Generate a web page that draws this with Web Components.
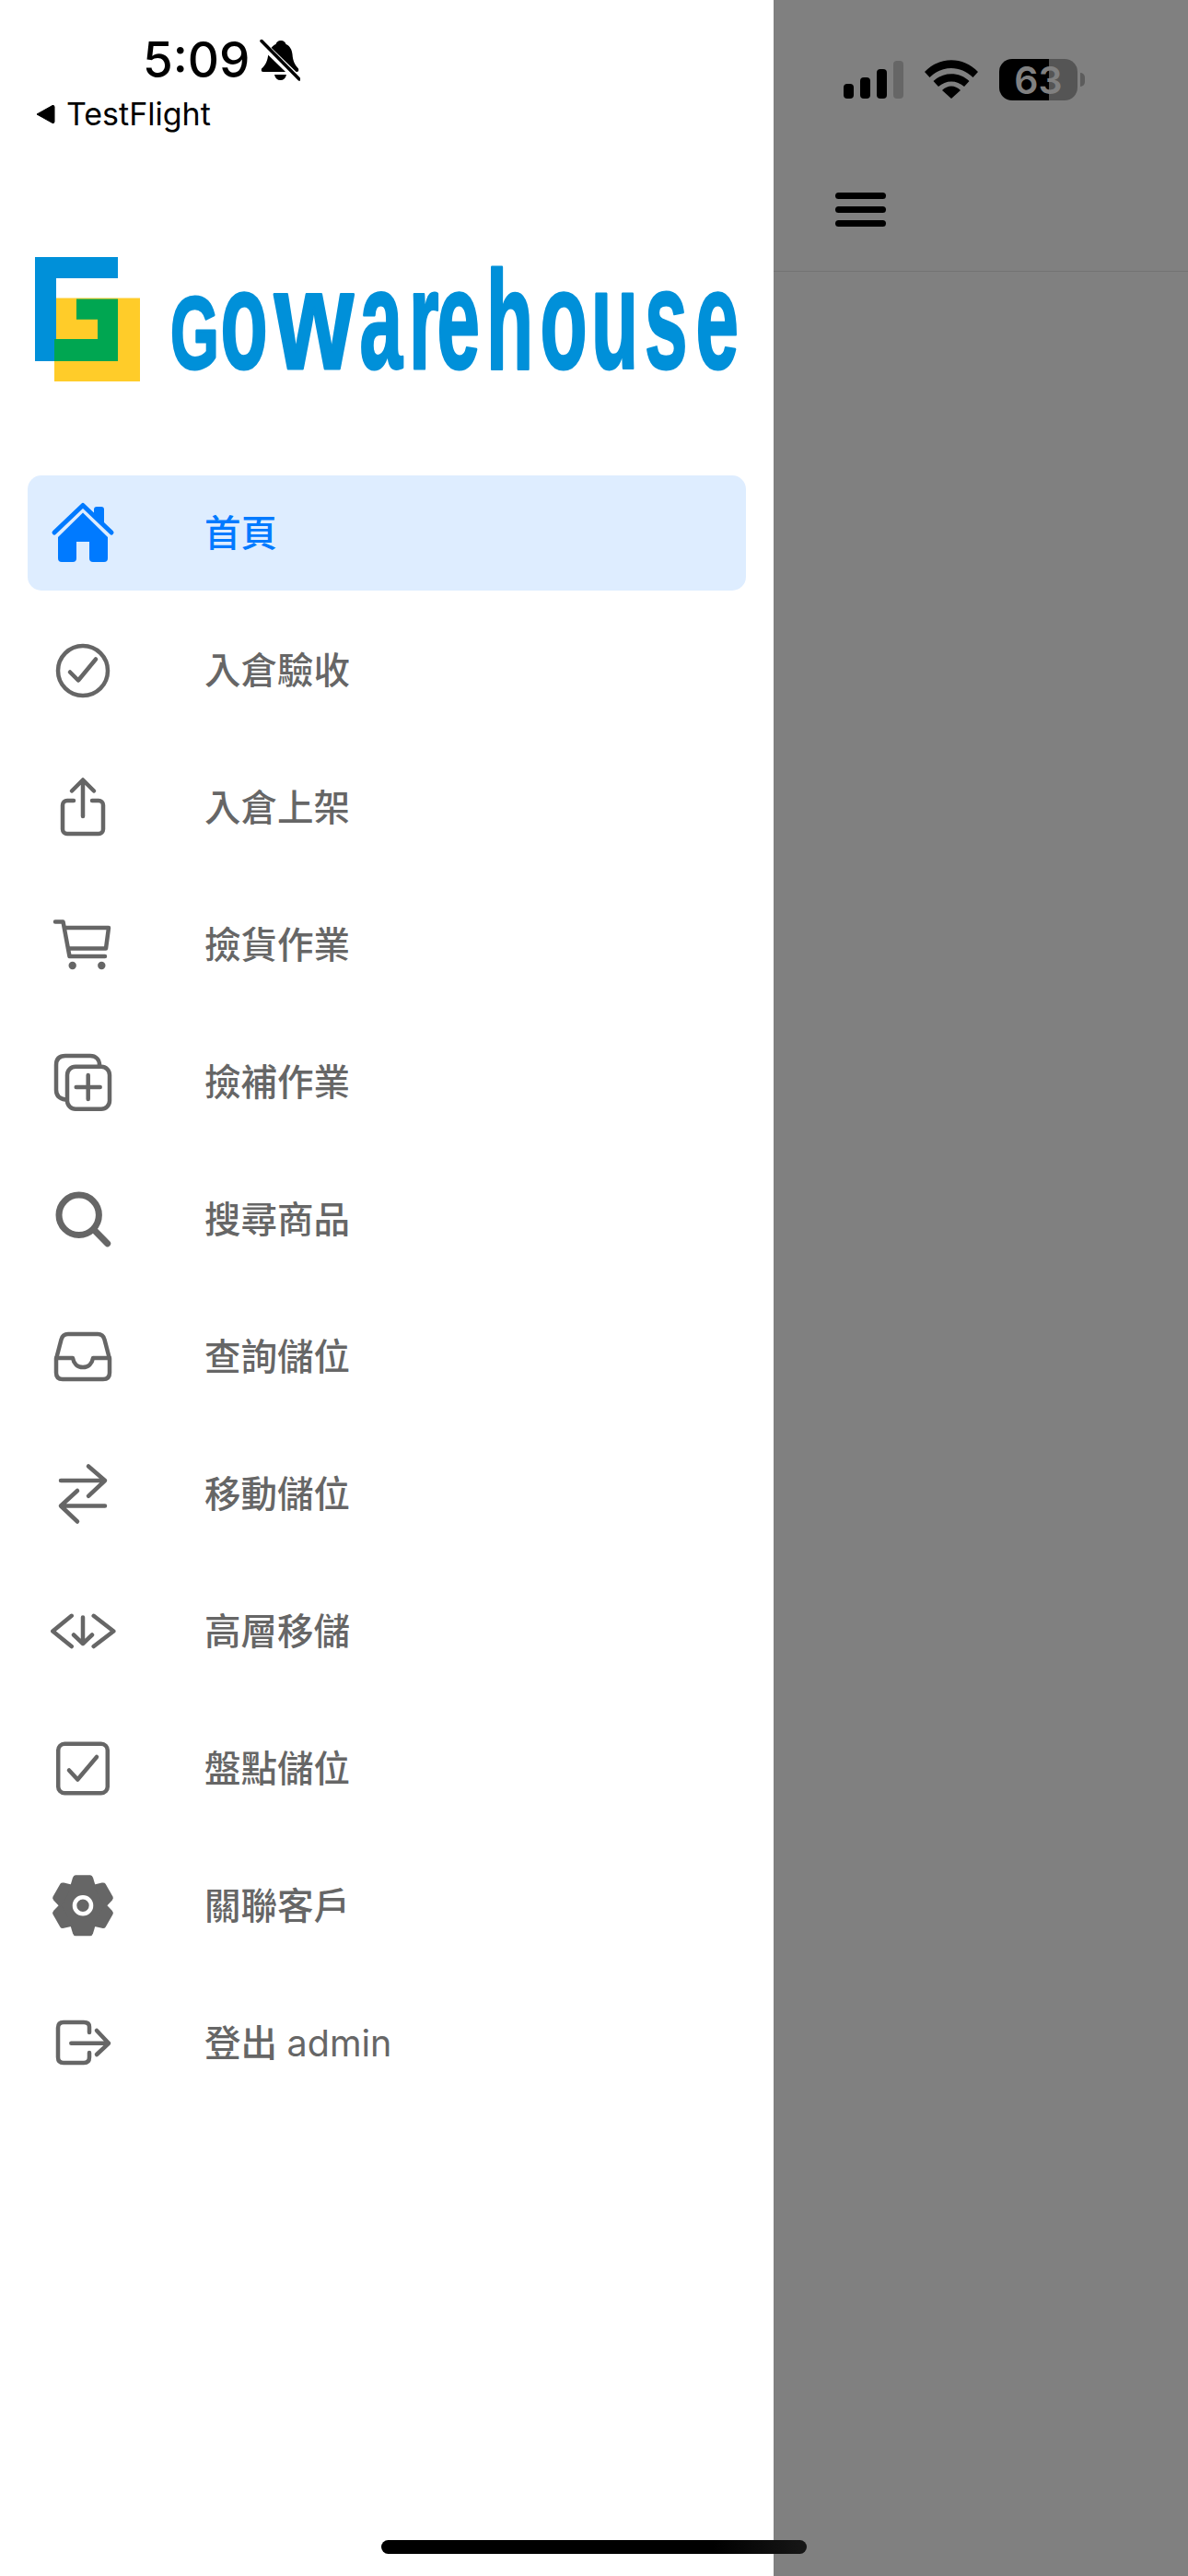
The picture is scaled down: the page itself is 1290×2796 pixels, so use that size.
<!DOCTYPE html>
<html lang="zh-Hant">
<head>
<meta charset="utf-8">
<title>gowarehouse</title>
<style>
  html, body { margin: 0; padding: 0; background: #fff; }
  body { font-family: Inter, "Noto Sans CJK TC", sans-serif; }
  .latin { font-weight: 400; }
</style>
</head>
<body>
<wh-app>
  <wh-drawer>
    <wh-status-left></wh-status-left>
    <wh-logo></wh-logo>
    <wh-nav>
      <wh-nav-item icon="home" active>首頁</wh-nav-item>
      <wh-nav-item icon="checkCircle">入倉驗收</wh-nav-item>
      <wh-nav-item icon="upload">入倉上架</wh-nav-item>
      <wh-nav-item icon="cart">撿貨作業</wh-nav-item>
      <wh-nav-item icon="plusCopy">撿補作業</wh-nav-item>
      <wh-nav-item icon="search">搜尋商品</wh-nav-item>
      <wh-nav-item icon="inbox">查詢儲位</wh-nav-item>
      <wh-nav-item icon="swap">移動儲位</wh-nav-item>
      <wh-nav-item icon="codeDown">高層移儲</wh-nav-item>
      <wh-nav-item icon="checkSquare">盤點儲位</wh-nav-item>
      <wh-nav-item icon="gear">關聯客戶</wh-nav-item>
      <wh-nav-item icon="logout">登出 <span class="latin">admin</span></wh-nav-item>
    </wh-nav>
  </wh-drawer>
  <wh-scrim>
    <wh-status-right></wh-status-right>
    <wh-topbar></wh-topbar>
  </wh-scrim>
</wh-app>

<script>
const FONT = 'Inter, "Noto Sans CJK TC", sans-serif';

// all icons are drawn in a 78x78 box, the row centers it
const ICONS = {
  home: `
    <path fill="currentColor" stroke="none" d="M51 18V13Q51 10 54 10H59Q62 10 62 13V31Z"/>
    <path fill="none" stroke-width="5" d="M8 38L39 8.5L70 38"/>
    <path fill="currentColor" stroke="none" d="M39 16.5L66 43V66Q66 70 62 70H50Q46 70 46 66V48H32V66Q32 70 28 70H16Q12 70 12 66V43Z"/>`,
  checkCircle: `
    <circle cx="39" cy="39" r="27"/>
    <path d="M25 40.5L34 49.5L53 26.5"/>`,
  upload: `
    <path d="M27 20.5L39 8.5L51 20.5M39 9V48"/>
    <path d="M29 31H22A5 5 0 0 0 17 36V62A5 5 0 0 0 22 67H56A5 5 0 0 0 61 62V36A5 5 0 0 0 56 31H49"/>`,
  cart: `
    <path d="M9 13.5H17.5L24.5 51H63"/>
    <path d="M20 20H67L64 42.5H24"/>
    <circle cx="27.7" cy="61" r="4.2" fill="currentColor" stroke="none"/>
    <circle cx="59.3" cy="61" r="4.2" fill="currentColor" stroke="none"/>`,
  plusCopy: `
    <path d="M57 20C57 14 53 10 47 10H20Q10 10 10 20V47Q10 56 20 57.5"/>
    <rect x="22" y="21.7" width="46" height="46" rx="9"/>
    <path d="M31.7 44H57.7M44.7 31V57"/>`,
  search: `
    <circle cx="34.7" cy="33.8" r="21.7" stroke-width="7"/>
    <path d="M50.7 49.5L65.7 64.8" stroke-width="7"/>`,
  inbox: `
    <path d="M10 41L15.5 20Q17 14 23 14H55Q61 14 62.5 20L68 41V56Q68 63 61 63H17Q10 63 10 56Z"/>
    <path d="M10 40H28C29 46 33 50 39 50C45 50 49 46 50 40H68"/>`,
  swap: `
    <path d="M15 24H63M45 8.5L63 24L45 40.8"/>
    <path d="M63 51.5H15M33 35L15 51.5L33 68.5"/>`,
  codeDown: `
    <path d="M26.7 21.8L6.3 38.5L26.7 55M50.7 21.8L72.3 38.5L50.7 55"/>
    <path d="M39 23.5V51.8M29 42.5L39 52L49 42.5"/>`,
  checkSquare: `
    <rect x="12.2" y="11.7" width="53.6" height="53.6" rx="7"/>
    <path d="M24 40.5L33.3 50.5L54 26"/>`,
  gear: `
    <g fill="currentColor" stroke="none">
      <circle cx="39" cy="38.2" r="24.5"/>
      ${[0, 60, 120, 180, 240, 300].map(a => `<path transform="rotate(${a} 39 38.2)" d="M31 5.2H47Q49 5.2 50 8L53 18H25L28 8Q29 5.2 31 5.2Z"/>`).join("")}
    </g>
    <circle cx="39" cy="38.2" r="9" stroke="#fff" stroke-width="4.6"/>`,
  logout: `
    <path d="M46 27V21Q46 16 40 16H18Q12 16 12 22V54Q12 60 18 60H40Q46 60 46 54V49"/>
    <path d="M26.3 38.8H67M54 25L67 38.8L54 51"/>`,
};

class WhApp extends HTMLElement {
  constructor() {
    super();
    this.attachShadow({ mode: "open" }).innerHTML = `
      <style>
        :host { display: flex; position: relative; width: 1290px; height: 2796px; overflow: hidden; background: #fff; }
        .home-bar {
          position: absolute; left: 414px; top: 2757px; width: 462px; height: 15px;
          border-radius: 8px; background: linear-gradient(90deg, #000 78%, #171717);
        }
      </style>
      <slot></slot>
      <div class="home-bar"></div>`;
  }
}

class WhDrawer extends HTMLElement {
  constructor() {
    super();
    this.attachShadow({ mode: "open" }).innerHTML = `
      <style>
        :host { display: flex; flex-direction: column; width: 840px; flex: none; background: #fff; }
      </style>
      <slot></slot>`;
  }
}

class WhStatusLeft extends HTMLElement {
  constructor() {
    super();
    this.attachShadow({ mode: "open" }).innerHTML = `
      <style>
        :host { display: block; height: 270px; color: #000; font-family: ${FONT}; }
        .time { display: flex; align-items: center; gap: 11px; height: 60px; margin-top: 35px; padding-left: 155px; font-size: 53px; font-weight: 500; }
        .time svg { width: 44px; height: 46px; margin-top: -1px; }
        .back { display: flex; align-items: center; gap: 12px; height: 57px; padding-left: 38px; font-size: 34px; }
        .back svg { width: 22px; height: 22px; }
      </style>
      <div class="time">
        <span>5:09</span>
        <svg viewBox="0 0 44 46">
          <path d="M23 2C26 2 28 4 28.500 6C33 8 35 12 35.500 17C36 24 38 28 42 32.500Q43 36 40 36H4Q1 36 2 32.500C6 29 8 25 9 19C10 12 13 8 17.500 6C18 4 20 2 23 2Z"/>
          <path d="M16 39H29C28 43 26 45 22.500 45C19 45 17 43 16 39Z"/>
          <path d="M2 5L42 44" stroke="#fff" stroke-width="8"/>
          <path d="M2 2.500L43 44" stroke="#000" stroke-width="3.500" stroke-linecap="round"/>
        </svg>
      </div>
      <div class="back">
        <svg viewBox="0 0 22 22"><path d="M2 11L19 1.500Q21 1 21 3V19Q21 21 19 20.500Z" stroke="#000" stroke-width="1" stroke-linejoin="round"/></svg>
        <span>TestFlight</span>
      </div>`;
  }
}

class WhLogo extends HTMLElement {
  constructor() {
    super();
    // the word is squeezed to 0.55 width, so x values are given in page px and divided
    const sx = x => (x / 0.55).toFixed(1);
    const rest = [390.5, 444, 474.5, 528, 586.5, 642, 700, 755.5].map(sx).join(" ");
    this.attachShadow({ mode: "open" }).innerHTML = `
      <style>
        :host { display: block; height: 246px; }
        svg { display: block; width: 840px; height: 246px; filter: blur(0.7px); }
        text { font-family: "Liberation Sans", sans-serif; font-weight: 700; fill: #0090d9; }
      </style>
      <svg viewBox="0 270 840 246">
        <rect x="59" y="323.500" width="93" height="90.500" fill="#ffcc29"/>
        <path fill="#0090d9" d="M38 279H128V302H61V392H38Z"/>
        <path fill="#00a651" d="M83 324.500H128V392H59V368H106V346.700H83Z"/>
        <text transform="scale(0.55 1)" y="400.500" font-size="152" stroke="#0090d9" stroke-width="3" stroke-linejoin="round"><tspan x="${sx(185)}" font-size="112" textLength="96" lengthAdjust="spacingAndGlyphs">G</tspan><tspan x="${sx(239.5)}">o</tspan><tspan x="${sx(298)}" textLength="156" lengthAdjust="spacingAndGlyphs">w</tspan><tspan x="${rest}">arehouse</tspan></text>
      </svg>`;
  }
}

class WhNav extends HTMLElement {
  constructor() {
    super();
    this.attachShadow({ mode: "open" }).innerHTML = `
      <style>
        :host { display: flex; flex-direction: column; gap: 24px; padding: 0 30px; }
      </style>
      <slot></slot>`;
  }
}

class WhNavItem extends HTMLElement {
  constructor() {
    super();
    this.attachShadow({ mode: "open" });
  }

  connectedCallback() {
    const icon = ICONS[this.getAttribute("icon")] || "";
    this.shadowRoot.innerHTML = `
      <style>
        :host {
          display: flex; align-items: center; gap: 93px; height: 125px; padding-left: 21px;
          border-radius: 15px; color: #666; font-family: ${FONT}; font-size: 39.500px; font-weight: 500;
        }
        :host([active]) { background: #deedff; color: #007aff; }
        svg {
          width: 78px; height: 78px; flex: none; fill: none; stroke: currentColor; stroke-width: 4.500;
          stroke-linecap: round; stroke-linejoin: round;
        }
        span { padding-bottom: 6px; }
      </style>
      <svg viewBox="0 0 78 78">${icon}</svg>
      <span><slot></slot></span>`;
  }
}

class WhScrim extends HTMLElement {
  constructor() {
    super();
    this.attachShadow({ mode: "open" }).innerHTML = `
      <style>
        :host { display: block; flex: 1; background: #808080; }
      </style>
      <slot></slot>`;
  }
}

class WhStatusRight extends HTMLElement {
  constructor() {
    super();
    this.attachShadow({ mode: "open" }).innerHTML = `
      <style>
        :host { display: flex; align-items: flex-start; gap: 23px; height: 45px; padding: 64px 0 0 76px; font-family: ${FONT}; }
        svg { display: block; flex: none; }
        .battery { display: flex; align-items: center; gap: 3px; }
        .cell {
          display: flex; align-items: center; justify-content: center; width: 85px; height: 45px; border-radius: 14px;
          background: linear-gradient(90deg, #000 54px, #555 54px); color: #808080; font-size: 41px; font-weight: 600;
        }
        .nub { width: 5px; height: 15px; border-radius: 0 8px 8px 0; background: #5c5c5c; }
      </style>
      <svg width="65" height="45" viewBox="0 0 65 45">
        <rect x="0" y="27" width="11" height="16" rx="4"/>
        <rect x="18" y="20" width="11" height="23" rx="4"/>
        <rect x="36" y="11" width="11" height="32" rx="4"/>
        <rect x="54" y="2" width="11" height="41" rx="4" fill="#666"/>
      </svg>
      <svg width="58" height="45" viewBox="0 0 58 45">
        <path d="M0 14C16 -3 42 -3 58 14L52.500 20C39 6.500 19 6.500 5.500 20Z"/>
        <path d="M9.500 24C20 13.500 38 13.500 48.500 24L43 30C35 22.500 23 22.500 15 30Z"/>
        <path d="M19 34C25 28 33 28 39 34L29 43Z"/>
      </svg>
      <div class="battery">
        <div class="cell">63</div>
        <div class="nub"></div>
      </div>`;
  }
}

class WhTopbar extends HTMLElement {
  constructor() {
    super();
    this.attachShadow({ mode: "open" }).innerHTML = `
      <style>
        :host {
          display: flex; flex-direction: column; gap: 8px; height: 85px; padding: 100px 0 0 67px;
          border-bottom: 1px solid #737373;
        }
        i { display: block; width: 55px; height: 7px; border-radius: 4px; background: #000; }
      </style>
      <i></i><i></i><i></i>`;
  }
}

customElements.define("wh-app", WhApp);
customElements.define("wh-drawer", WhDrawer);
customElements.define("wh-status-left", WhStatusLeft);
customElements.define("wh-logo", WhLogo);
customElements.define("wh-nav", WhNav);
customElements.define("wh-nav-item", WhNavItem);
customElements.define("wh-scrim", WhScrim);
customElements.define("wh-status-right", WhStatusRight);
customElements.define("wh-topbar", WhTopbar);
</script>
</body>
</html>
